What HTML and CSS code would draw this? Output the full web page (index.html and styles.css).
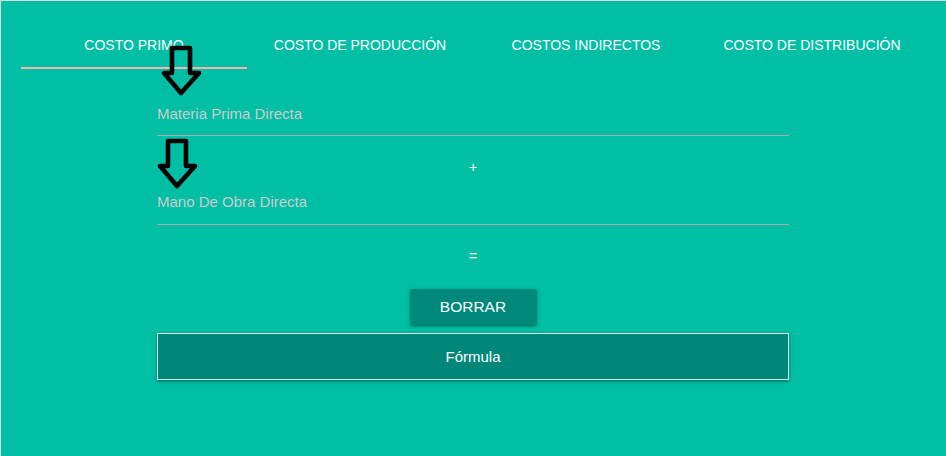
FILE: index.html
```html
<!DOCTYPE html>
<html lang="es">
<head>
<meta charset="utf-8">
<title>Costos</title>
<link rel="stylesheet" href="styles.css">
</head>
<body>
<div class="page">
  <ul class="tabs">
    <li class="tab active">COSTO PRIMO</li>
    <li class="tab">COSTO DE PRODUCCIÓN</li>
    <li class="tab">COSTOS INDIRECTOS</li>
    <li class="tab">COSTO DE DISTRIBUCIÓN</li>
  </ul>
  <div class="content">
    <div class="field field-first">Materia Prima Directa</div>
    <div class="op op-plus">+</div>
    <div class="field field-second">Mano De Obra Directa</div>
    <div class="op op-eq">=</div>
    <div class="actions"><button class="btn">BORRAR</button></div>
    <div class="formula">Fórmula</div>
  </div>
  <svg class="arrow arrow-one" width="44" height="54" viewBox="0 0 44 54"><polygon points="13,4 31,4 31,29 40,29 22,49 5,29 13,29" fill="none" stroke="#000" stroke-width="4.6" stroke-linejoin="round"/></svg>
  <svg class="arrow arrow-two" width="44" height="54" viewBox="0 0 44 54"><polygon points="13,4 31,4 31,29 40,29 22,49 5,29 13,29" fill="none" stroke="#000" stroke-width="4.6" stroke-linejoin="round"/></svg>
</div>
</body>
</html>
```
FILE: styles.css
```css
html, body {
  margin: 0;
  padding: 0;
  background: #00bfa5;
}
body {
  font-family: "Liberation Sans", Arial, sans-serif;
}
.page {
  position: relative;
  box-sizing: border-box;
  min-height: 470px;
  width: 960px;
  background: #00bfa5;
  border-top: 1px solid #dcdcdc;
  border-left: 1px solid #dcdcdc;
  padding-top: 20px;
}
.tabs {
  list-style: none;
  margin: 0 0 0 20px;
  padding: 0;
  width: 904px;
  display: grid;
  grid-template-columns: repeat(4, 226px);
  height: 48px;
}
.tab {
  box-sizing: border-box;
  height: 48px;
  text-align: center;
  line-height: 48px;
  font-size: 14px;
  color: #ffffff;
  white-space: nowrap;
}
.tab.active {
  border-bottom: 2px solid #f6b2b5;
  line-height: 46px;
  padding-top: 1px;
}
.content {
  margin-left: 156px;
  width: 632px;
}
.field {
  box-sizing: content-box;
  height: 20px;
  font-size: 15px;
  line-height: 20px;
  color: #cccccc;
  border-bottom: 1px solid #b0aaaa;
}
.field-first {
  padding-top: 35px;
  padding-bottom: 11px;
}
.field-second {
  padding-top: 15px;
  padding-bottom: 12px;
}
.op {
  height: 20px;
  text-align: center;
  color: #ffffff;
  font-size: 14px;
  line-height: 20px;
}
.op-plus {
  margin-top: 21px;
}
.op-eq {
  margin-top: 21px;
}
.actions {
  margin-top: 23px;
  display: flex;
  justify-content: center;
}
.btn {
  width: 127px;
  height: 36px;
  border: none;
  border-radius: 2px;
  background: #00897b;
  color: #ffffff;
  font-family: "Liberation Sans", Arial, sans-serif;
  font-size: 15.5px;
  padding: 0;
  box-shadow: 0 2px 2px 0 rgba(0,0,0,0.14), 0 3px 1px -2px rgba(0,0,0,0.12), 0 1px 5px 0 rgba(0,0,0,0.2);
}
.formula {
  margin-top: 8px;
  box-sizing: border-box;
  height: 47px;
  border: 1px solid #e0e0e0;
  background: #00877a;
  color: #ffffff;
  font-size: 15px;
  line-height: 45px;
  text-align: center;
  box-shadow: 0 2px 2px 0 rgba(0,0,0,0.14), 0 3px 1px -2px rgba(0,0,0,0.12), 0 1px 5px 0 rgba(0,0,0,0.2);
}
.arrow {
  position: absolute;
  display: block;
}
.arrow-one {
  left: 158px;
  top: 43px;
}
.arrow-two {
  left: 154px;
  top: 136px;
}
```
